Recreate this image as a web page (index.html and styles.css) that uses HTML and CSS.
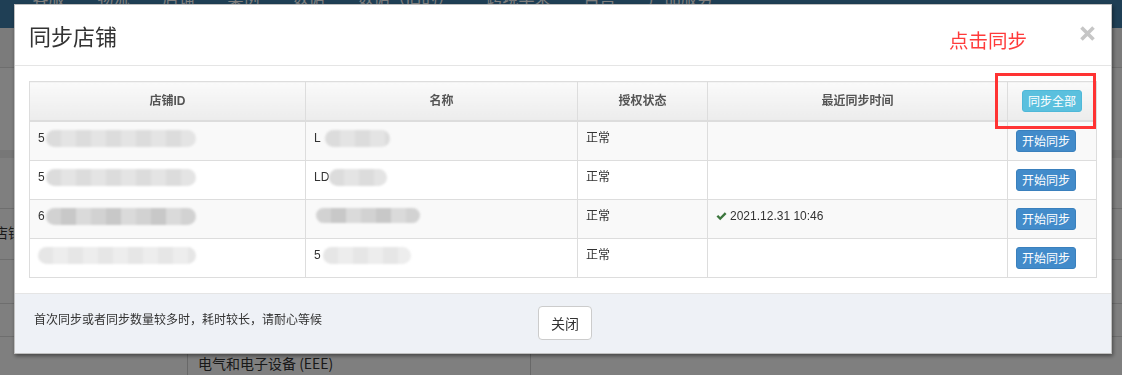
FILE: index.html
```html
<!DOCTYPE html>
<html lang="zh-CN">
<head>
  <meta charset="UTF-8" />
  <meta name="viewport" content="width=device-width, initial-scale=1.0"/>
  <title>同步店铺</title>
  <link rel="stylesheet" href="styles.css">
</head>
<body>
  <div class="page">
    <nav class="topnav">
      <a href="#">客服</a>
      <a href="#">物流</a>
      <a href="#">店铺</a>
      <a href="#">案例</a>
      <a href="#">数据</a>
      <a href="#">数据（旧的）</a>
      <a href="#">跨境丰采</a>
      <a href="#">自营</a>
      <a href="#">产品服务</a>
    </nav>
    <div class="toolbar"></div>
    <div class="filters"></div>
    <div class="list-head"></div>
    <div class="list-row tall"></div>
    <div class="list-row tall label-row"><span class="cut-label">店铺</span></div>
    <div class="list-row mid"></div>
    <div class="list-row short"></div>
    <div class="list-row cells">
      <div class="cell first"></div>
      <div class="cell">电气和电子设备 (EEE)</div>
      <div class="cell"></div>
    </div>
  </div>

  <div class="backdrop">
    <div class="modal">
      <div class="modal-header">
        <h4 class="modal-title">同步店铺</h4>
        <span class="hint">点击同步</span>
        <button class="close" type="button">
          <svg width="15" height="15" viewBox="0 0 15 15"><path d="M1.5 1.5 L13.5 13.5 M13.5 1.5 L1.5 13.5" stroke="#c6c6c6" stroke-width="3.6" fill="none"/></svg>
        </button>
      </div>

      <div class="modal-body">
        <table class="store-table">
          <colgroup>
            <col class="c-id"><col class="c-name"><col class="c-state"><col class="c-time"><col class="c-op">
          </colgroup>
          <thead>
            <tr>
              <th>店铺ID</th>
              <th>名称</th>
              <th>授权状态</th>
              <th>最近同步时间</th>
              <th><button class="btn btn-info" type="button">同步全部</button></th>
            </tr>
          </thead>
          <tbody>
            <tr>
              <td>5<span class="blur id"></span></td>
              <td>L<span class="blur name-a"></span></td>
              <td>正常</td>
              <td></td>
              <td><button class="btn btn-primary" type="button">开始同步</button></td>
            </tr>
            <tr>
              <td>5<span class="blur id"></span></td>
              <td>LD<span class="blur name-b"></span></td>
              <td>正常</td>
              <td></td>
              <td><button class="btn btn-primary" type="button">开始同步</button></td>
            </tr>
            <tr>
              <td>6<span class="blur id dark"></span></td>
              <td><span class="blur name-c dark"></span></td>
              <td>正常</td>
              <td class="synced">
                <svg class="check" width="11" height="9" viewBox="0 0 11 9"><path d="M0.5 4.6 L2.2 2.9 L4.2 4.9 L8.8 0.3 L10.5 2 L4.2 8.3 Z" fill="#3c763d"/></svg>2021.12.31 10:46
              </td>
              <td><button class="btn btn-primary" type="button">开始同步</button></td>
            </tr>
            <tr>
              <td><span class="blur id light first"></span></td>
              <td>5<span class="blur name-d light"></span></td>
              <td>正常</td>
              <td></td>
              <td><button class="btn btn-primary" type="button">开始同步</button></td>
            </tr>
          </tbody>
        </table>
      </div>

      <div class="modal-footer">
        <p class="footer-note">首次同步或者同步数量较多时，耗时较长，请耐心等候</p>
        <button class="btn btn-default" type="button">关闭</button>
      </div>

      <div class="mark-box"></div>
    </div>
  </div>
</body>
</html>
```

FILE: styles.css
```css
body {
  margin: 0;
  font-family: "Liberation Sans", "Noto Sans CJK SC", sans-serif;
  font-size: 14px;
  color: #333;
}

/* page behind the dialog */
.page {
  height: 375px;
  overflow: hidden;
  background: #fff;
}
.topnav {
  height: 28px;
  background: #3e7eaa;
  display: flex;
  padding-left: 16px;
  overflow: hidden;
}
.topnav a {
  color: #fff;
  font-size: 16px;
  line-height: 16px;
  margin-top: -11px;
  padding: 0 16.5px;
  text-decoration: none;
  white-space: nowrap;
  font-family: "Noto Sans CJK SC", sans-serif;
}
.toolbar {
  height: 39px;
  background: #f6f6f6;
  border-bottom: 1px solid #dcdcdc;
}
.filters {
  height: 82px;
}
.list-head {
  height: 8px;
  background: #eeeeee;
}
.list-row {
  box-sizing: border-box;
  border-bottom: 1px solid #dcdcdc;
}
.list-row.tall {
  height: 51px;
}
.list-row.mid {
  height: 44px;
}
.list-row.short {
  height: 33px;
}
.label-row {
  padding-top: 14px;
}
.cut-label {
  display: block;
  margin-left: -6px;
  line-height: 18px;
  font-family: "Noto Sans CJK SC", sans-serif;
}
.list-row.cells {
  display: grid;
  grid-template-columns: 187px 343px 1fr;
  height: 38px;
  border-bottom: none;
}
.list-row.cells .cell {
  border-left: 1px solid #d0d0d0;
  padding: 16px 10px 0;
  font-size: 14px;
  line-height: 20px;
  color: #333;
  white-space: nowrap;
  font-family: "Noto Sans CJK SC", sans-serif;
}
.list-row.cells .cell.first {
  border-left: none;
}

/* dialog */
.backdrop {
  position: fixed;
  inset: 0;
  background: rgba(0, 0, 0, 0.5);
  padding: 4px 0 0 14px;
}
.modal {
  position: relative;
  box-sizing: border-box;
  width: 1098px;
  background: #fff;
  border: 1px solid rgba(0, 0, 0, 0.25);
  box-shadow: 1px 2px 4px rgba(0, 0, 0, 0.45);
}
.modal-header {
  display: flex;
  align-items: center;
  justify-content: space-between;
  padding: 15px 15px 15px 14px;
  border-bottom: 1px solid #e5e5e5;
}
.modal-title {
  margin: 0;
  font-size: 22px;
  line-height: 30px;
  font-weight: normal;
  color: #333;
  font-family: "Noto Sans CJK SC", sans-serif;
}
.hint {
  position: absolute;
  left: 934px;
  top: 24px;
  font-size: 19.5px;
  line-height: 22px;
  color: #ff3b3b;
  font-family: "Noto Sans CJK SC", sans-serif;
}
.close {
  border: none;
  background: none;
  padding: 0;
  margin: -4px 1px 0 0;
  cursor: pointer;
  line-height: 0;
}
.mark-box {
  position: absolute;
  left: 980px;
  top: 68px;
  width: 101px;
  height: 56px;
  box-sizing: border-box;
  border: 3px solid #ff3333;
}
.modal-body {
  padding: 15px 15px 15px 14px;
}

.store-table {
  width: 100%;
  border-collapse: collapse;
  table-layout: fixed;
  font-size: 12px;
  border: 1px solid #dddddd;
}
.c-id { width: 276px; }
.c-name { width: 272px; }
.c-state { width: 130px; }
.c-time { width: 300px; }
.c-op { width: 89px; }
.store-table th,
.store-table td {
  border: 1px solid #dddddd;
  padding: 8px;
  line-height: 17px;
  white-space: nowrap;
  overflow: hidden;
}
.store-table th {
  background: linear-gradient(#fafafa, #ececec);
  border-bottom-width: 2px;
  color: #555;
  font-weight: bold;
  text-align: center;
  vertical-align: middle;
}
.store-table td {
  vertical-align: top;
  text-align: left;
  color: #333;
}
.store-table tbody tr:nth-child(odd) td {
  background: #f9f9f9;
}
.synced {
  color: #34566b;
}
.check {
  margin-right: 3px;
  vertical-align: -1px;
}

.blur {
  display: inline-block;
  height: 17px;
  vertical-align: -5px;
  background: repeating-linear-gradient(90deg, #dcdcdc 0 15px, #e4e4e4 15px 30px);
  border-radius: 9px;
  filter: blur(1px);
}
.blur.id { width: 150px; margin-left: 1px; }
.blur.id.first { margin-left: 0; width: 158px; }
.blur.name-a { width: 65px; margin-left: 4px; }
.blur.name-b { width: 58px; }
.blur.name-c { width: 104px; margin-left: 2px; height: 15px; vertical-align: -3px; }
.blur.name-d { width: 88px; margin-left: 2px; }
.blur.dark {
  background: repeating-linear-gradient(90deg, #d2d2d2 0 15px, #c8c8c8 15px 30px, #dadada 30px 45px);
}
.blur.light {
  background: repeating-linear-gradient(90deg, #e6e6e6 0 15px, #ededed 15px 30px);
}

.btn {
  display: inline-block;
  vertical-align: top;
  font-family: "Noto Sans CJK SC", sans-serif;
  font-size: 12px;
  line-height: 18px;
  padding: 1px 5px;
  border: 1px solid transparent;
  border-radius: 3px;
  cursor: pointer;
  color: #fff;
}
.btn-primary {
  background: #428bca;
  border-color: #3a80bd;
}
.btn-info {
  background: #5bc0de;
  border-color: #4fb8d8;
}
.btn-default {
  background: #fff;
  border-color: #cccccc;
  color: #333;
  font-size: 14px;
  line-height: 20px;
  padding: 6px 12px;
  border-radius: 4px;
}

.modal-footer {
  display: grid;
  grid-template-columns: 1fr auto 1fr;
  background: #eef1f6;
  border-top: 1px solid #e5e5e5;
  padding: 12px 15px 13px 19px;
}
.footer-note {
  margin: 4px 0 0;
  font-size: 12px;
  line-height: 17px;
  color: #333;
  white-space: nowrap;
  font-family: "Noto Sans CJK SC", sans-serif;
}
```
